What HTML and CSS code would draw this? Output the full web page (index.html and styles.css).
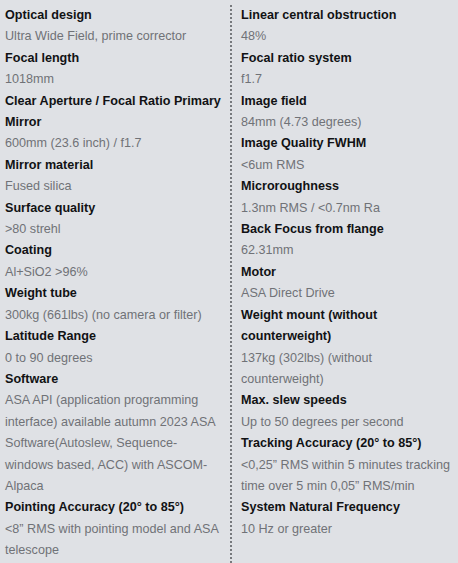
FILE: index.html
```html
<!DOCTYPE html>
<html lang="en">
<head>
<meta charset="utf-8">
<title>Specifications</title>
<link rel="stylesheet" href="styles.css">
</head>
<body>
<div class="specs">
  <div class="col col-left">
    <div class="label">Optical design</div>
    <div class="value">Ultra Wide Field, prime corrector</div>
    <div class="label">Focal length</div>
    <div class="value">1018mm</div>
    <div class="label">Clear Aperture / Focal Ratio Primary Mirror</div>
    <div class="value">600mm (23.6 inch) / f1.7</div>
    <div class="label">Mirror material</div>
    <div class="value">Fused silica</div>
    <div class="label">Surface quality</div>
    <div class="value">&gt;80 strehl</div>
    <div class="label">Coating</div>
    <div class="value">Al+SiO2 &gt;96%</div>
    <div class="label">Weight tube</div>
    <div class="value">300kg (661lbs) (no camera or filter)</div>
    <div class="label">Latitude Range</div>
    <div class="value">0 to 90 degrees</div>
    <div class="label">Software</div>
    <div class="value">ASA API (application programming interface) available autumn 2023 ASA Software(Autoslew, Sequence-windows based, ACC) with ASCOM-Alpaca</div>
    <div class="label">Pointing Accuracy (20° to 85°)</div>
    <div class="value">&lt;8” RMS with pointing model and ASA telescope</div>
  </div>
  <div class="col col-right">
    <div class="label">Linear central obstruction</div>
    <div class="value">48%</div>
    <div class="label">Focal ratio system</div>
    <div class="value">f1.7</div>
    <div class="label">Image field</div>
    <div class="value">84mm (4.73 degrees)</div>
    <div class="label">Image Quality FWHM</div>
    <div class="value">&lt;6um RMS</div>
    <div class="label">Microroughness</div>
    <div class="value">1.3nm RMS / &lt;0.7nm Ra</div>
    <div class="label">Back Focus from flange</div>
    <div class="value">62.31mm</div>
    <div class="label">Motor</div>
    <div class="value">ASA Direct Drive</div>
    <div class="label">Weight mount (without counterweight)</div>
    <div class="value">137kg (302lbs) (without counterweight)</div>
    <div class="label">Max. slew speeds</div>
    <div class="value">Up to 50 degrees per second</div>
    <div class="label">Tracking Accuracy (20° to 85°)</div>
    <div class="value">&lt;0,25” RMS within 5 minutes tracking time over 5 min 0,05” RMS/min</div>
    <div class="label">System Natural Frequency</div>
    <div class="value">10 Hz or greater</div>
  </div>
</div>
</body>
</html>
```

FILE: styles.css
```css
html, body {
  margin: 0;
  padding: 0;
  background: #dfe1e5;
}

body {
  font-family: "Liberation Sans", Arial, sans-serif;
  font-size: 12.6px;
  line-height: 21.4px;
}

.specs {
  display: grid;
  grid-template-columns: 232px 1fr;
  padding-top: 5px;
  min-height: 563px;
  box-sizing: border-box;
}

.col {
  display: flex;
  flex-direction: column;
}

.col-left {
  padding: 0 8px 0 5px;
  border-right: 2px dotted #77797d;
}

.col-right {
  padding: 0 6px 0 9px;
}

.label {
  font-weight: bold;
  color: #111214;
}

.value {
  color: #707277;
}
```
